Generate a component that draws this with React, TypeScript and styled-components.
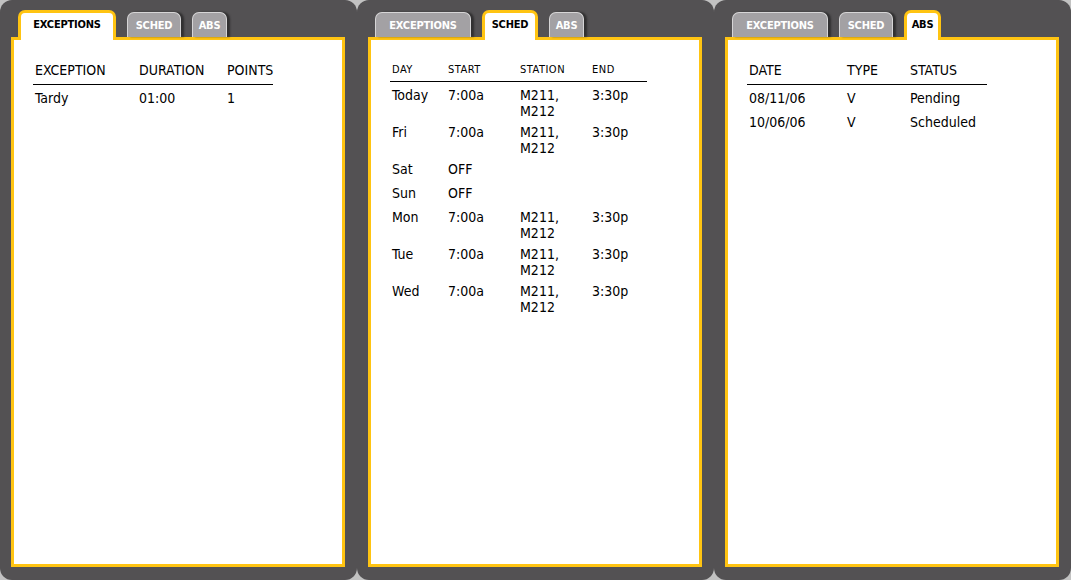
import styled, { createGlobalStyle } from 'styled-components';

const GlobalStyle = createGlobalStyle`
  html, body {
    margin: 0;
    padding: 0;
    background: #c2c2c2;
  }
  * {
    box-sizing: border-box;
  }
`;

const Page = styled.div`
  display: flex;
  width: 1071px;
  height: 580px;
  font-family: "DejaVu Sans Condensed", "DejaVu Sans", Verdana, sans-serif;
  color: #000;
`;

const Panel = styled.div`
  flex: 1;
  display: flex;
  flex-direction: column;
  background: #535153;
  border-radius: 12px;
  padding: 10px 12px 13px 11px;
`;

const TabRow = styled.div`
  display: flex;
  align-items: flex-end;
  gap: 11px;
  padding-left: 7px;
  height: 30px;
  margin-bottom: -3px;
  position: relative;
  z-index: 1;
`;

const Tab = styled.div<{ $active?: boolean; $width: number }>`
  width: ${p => p.$width}px;
  display: flex;
  align-items: center;
  justify-content: center;
  font-weight: bold;
  font-size: 11px;
  letter-spacing: -0.2px;
  border-radius: 7px 7px 0 0;
  ${p =>
    p.$active
      ? `
    height: 30px;
    padding-bottom: 4px;
    background: #fff;
    color: #000;
    border: 3px solid #ffc412;
    border-bottom: none;
  `
      : `
    height: 25px;
    margin-bottom: 3px;
    background: #a3a1a4;
    color: #fff;
    border: 1px solid #d6d5d6;
    border-bottom: none;
    box-shadow: 3px 0 2px rgba(20, 20, 20, 0.55);
  `}
`;

const Sheet = styled.div`
  flex: 1;
  background: #fff;
  border: 3px solid #ffc412;
  padding: 22px 0 0 19px;
`;

const Table = styled.div<{ $width: number; $compact?: boolean }>`
  width: ${p => p.$width}px;
  margin-top: ${p => (p.$compact ? '1px' : '0')};
`;

const HeadRow = styled.div<{ $cols: string; $compact?: boolean }>`
  display: grid;
  grid-template-columns: ${p => p.$cols};
  border-bottom: 1px solid #000;
  font-size: ${p => (p.$compact ? '11px' : '14px')};
  letter-spacing: ${p => (p.$compact ? '0.5px' : '0')};
  line-height: ${p => (p.$compact ? '14px' : '16px')};
  padding-bottom: ${p => (p.$compact ? '4px' : '6px')};
`;

const Row = styled.div<{ $cols: string; $compact?: boolean }>`
  display: grid;
  grid-template-columns: ${p => p.$cols};
  font-size: 14px;
  line-height: 16px;
  min-height: 24px;
  padding-top: 5px;
`;

const Cell = styled.div`
  padding-left: 2px;
  white-space: pre-line;
`;

type TableDef = {
  width: number;
  cols: string;
  compact?: boolean;
  head: string[];
  rows: string[][];
};

const TABS = [
  { label: 'EXCEPTIONS', width: 96 },
  { label: 'SCHED', width: 54 },
  { label: 'ABS', width: 35 },
];

const PANELS: { active: number; table: TableDef }[] = [
  {
    active: 0,
    table: {
      width: 240,
      cols: '104px 88px 48px',
      head: ['EXCEPTION', 'DURATION', 'POINTS'],
      rows: [['Tardy', '01:00', '1']],
    },
  },
  {
    active: 1,
    table: {
      width: 257,
      cols: '56px 72px 72px 57px',
      compact: true,
      head: ['DAY', 'START', 'STATION', 'END'],
      rows: [
        ['Today', '7:00a', 'M211,\nM212', '3:30p'],
        ['Fri', '7:00a', 'M211,\nM212', '3:30p'],
        ['Sat', 'OFF', '', ''],
        ['Sun', 'OFF', '', ''],
        ['Mon', '7:00a', 'M211,\nM212', '3:30p'],
        ['Tue', '7:00a', 'M211,\nM212', '3:30p'],
        ['Wed', '7:00a', 'M211,\nM212', '3:30p'],
      ],
    },
  },
  {
    active: 2,
    table: {
      width: 240,
      cols: '98px 63px 79px',
      head: ['DATE', 'TYPE', 'STATUS'],
      rows: [
        ['08/11/06', 'V', 'Pending'],
        ['10/06/06', 'V', 'Scheduled'],
      ],
    },
  },
];

function DataTable({ table }: { table: TableDef }) {
  return (
    <Table $width={table.width} $compact={table.compact}>
      <HeadRow $cols={table.cols} $compact={table.compact}>
        {table.head.map(h => (
          <Cell key={h}>{h}</Cell>
        ))}
      </HeadRow>
      {table.rows.map((r, i) => (
        <Row key={i} $cols={table.cols} $compact={table.compact}>
          {r.map((c, j) => (
            <Cell key={j}>{c}</Cell>
          ))}
        </Row>
      ))}
    </Table>
  );
}

export default function App() {
  return (
    <>
      <GlobalStyle />
      <Page>
        {PANELS.map((panel, i) => (
          <Panel key={i}>
            <TabRow>
              {TABS.map((t, j) => (
                <Tab key={t.label} $active={j === panel.active} $width={j === panel.active ? t.width + 2 : t.width}>
                  {t.label}
                </Tab>
              ))}
            </TabRow>
            <Sheet>
              <DataTable table={panel.table} />
            </Sheet>
          </Panel>
        ))}
      </Page>
    </>
  );
}
